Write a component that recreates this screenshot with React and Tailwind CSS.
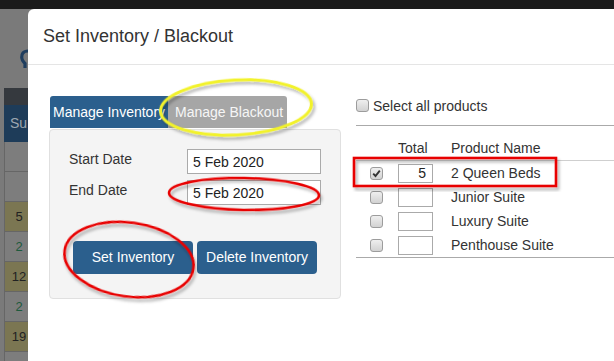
import React from "react";

function Cb({ checked }) {
  return (
    <span className="w-[13px] h-[13px] rounded-[3px] border border-[#9c9c9c] bg-linear-to-b from-[#efefef] to-[#d2d2d2] flex items-center justify-center shrink-0">
      {checked && (
        <svg width="9" height="9" viewBox="0 0 9 9">
          <path d="M1.2 4.6 L3.5 7 L7.8 1.6" stroke="#333" strokeWidth="1.9" fill="none" />
        </svg>
      )}
    </span>
  );
}

function LeftStrip() {
  const cells = [
    { bg: "bg-[#7d7d7d]", t: "" },
    { bg: "bg-[#7d7d7d]", t: "" },
    { bg: "bg-[#7b7652]", t: "5", c: "text-[#222]" },
    { bg: "bg-[#7d7d7d]", t: "2", c: "text-[#1d5a3e]" },
    { bg: "bg-[#7b7652]", t: "12", c: "text-[#222]" },
    { bg: "bg-[#7d7d7d]", t: "2", c: "text-[#1d5a3e]" },
    { bg: "bg-[#7b7652]", t: "19", c: "text-[#222]" },
    { bg: "bg-[#7d7d7d]", t: "" },
  ];
  return (
    <div className="w-[28px] shrink-0 overflow-hidden flex flex-col">
      <div className="h-[79px] flex justify-end items-start pt-[39px] shrink-0">
        <svg width="8" height="21" viewBox="0 0 8 21">
          <path d="M8 3 C3 3 1.5 6 1.8 10 C2 13 4 14 5 15.5 L5 20" stroke="#1f3d5e" strokeWidth="3.2" fill="none" />
        </svg>
      </div>
      <div className="ml-[4px] w-[40px] flex flex-col">
        <div className="h-[17px] bg-[#35393e]" />
        <div className="h-[37px] bg-[#1e3c59] flex items-center pl-[6px] text-[14px] text-[#9ea7b0]">Su</div>
        {cells.map((c, i) => (
          <div
            key={i}
            className={`h-[30px] w-[29px] border-b border-l border-[#666] ${c.bg} ${c.c || ""} flex items-center justify-center text-[13px]`}
          >
            {c.t}
          </div>
        ))}
      </div>
    </div>
  );
}

function Overlay() {
  return (
    <svg className="absolute inset-0 pointer-events-none" width="614" height="361" viewBox="0 0 614 361">
      <defs>
        <filter id="sh" x="-20%" y="-20%" width="140%" height="140%">
          <feDropShadow dx="2" dy="3" stdDeviation="1.6" floodColor="#000" floodOpacity="0.3" />
        </filter>
      </defs>
      <ellipse cx="236" cy="107.5" rx="75.5" ry="27.5" transform="rotate(-3 236 107.5)" fill="none" stroke="#f2f22a" strokeWidth="3" filter="url(#sh)" />
      <ellipse cx="244" cy="194" rx="75" ry="16" transform="rotate(1 244 194)" fill="none" stroke="#e80000" strokeWidth="2.6" filter="url(#sh)" />
      <ellipse cx="129" cy="259.5" rx="65" ry="37" transform="rotate(8 129 259.5)" fill="none" stroke="#e80000" strokeWidth="2.6" filter="url(#sh)" />
      <rect x="354" y="158" width="202" height="28" fill="none" stroke="#e80000" strokeWidth="2.6" filter="url(#sh)" />
    </svg>
  );
}

export default function App() {
  const products = [
    { name: "2 Queen Beds", checked: true, total: "5" },
    { name: "Junior Suite" },
    { name: "Luxury Suite" },
    { name: "Penthouse Suite" },
  ];
  return (
    <div className="w-[614px] h-[361px] overflow-hidden relative flex flex-col bg-[#7a7a7a] font-['Liberation_Sans',Arial,sans-serif] text-[#333]">
      <div className="h-[9px] bg-[#1b1b1b] shrink-0" />
      <div className="flex flex-1 min-h-0">
        <LeftStrip />
        <div className="flex-1 bg-white rounded-tl-[6px] flex flex-col min-w-0">
          <div className="h-[56px] shrink-0 border-b border-[#e5e5e5] pl-[15px] flex items-center text-[18px] text-[#333]">
            Set Inventory / Blackout
          </div>
          <div className="flex pl-[21px]">
            <div className="w-[292px] shrink-0 pt-[31px]">
              <div className="flex h-[32px] ml-[1px]">
                <div className="w-[118px] bg-[#2b5f8d] text-white text-[14px] flex items-center pl-[3px] whitespace-nowrap overflow-hidden rounded-tl-[3px]">
                  Manage Inventory
                </div>
                <div className="w-[119px] bg-[#a6a6a6] text-[#f6f6f6] text-[14px] flex items-center pl-[7px] whitespace-nowrap overflow-hidden rounded-tr-[3px]">
                  Manage Blackout
                </div>
              </div>
              <div className="mt-[1px] h-[170px] border border-[#e0e0e0] rounded-[4px] bg-[#f4f4f4] pl-[19px] pt-[19px]">
                <div className="grid grid-cols-[118px_134px] gap-y-[6px] text-[14px] leading-[16px]">
                  <div className="pt-[2px]">Start Date</div>
                  <div className="h-[25px] border border-[#aaa] bg-white pl-[5px] flex items-center text-[#222]">5 Feb 2020</div>
                  <div className="pt-[2px]">End Date</div>
                  <div className="h-[25px] border border-[#aaa] bg-white pl-[5px] flex items-center text-[#222]">5 Feb 2020</div>
                </div>
                <div className="flex gap-[4px] mt-[36px] ml-[4px]">
                  <div className="w-[120px] h-[33px] rounded-[4px] bg-[#2b5f8d] text-white text-[14px] flex items-center justify-center">
                    Set Inventory
                  </div>
                  <div className="w-[120px] h-[33px] rounded-[4px] bg-[#2b5f8d] text-white text-[14px] flex items-center justify-center">
                    Delete Inventory
                  </div>
                </div>
              </div>
            </div>
            <div className="flex-1 ml-[15px] pt-[33px] text-[14px] leading-[16px]">
              <div className="h-[15px] flex items-center gap-[4px]">
                <Cb />
                <span>Select all products</span>
              </div>
              <div className="mt-[12px] h-px bg-[#aaa]" />
              <div className="grid grid-cols-[42px_53px_1fr] h-[35px] border-b border-[#cfcfcf] pt-[14px]">
                <div />
                <div>Total</div>
                <div>Product Name</div>
              </div>
              {products.map((p, i) => (
                <div key={i} className="grid grid-cols-[42px_53px_1fr] h-[24px] items-center">
                  <div className="pl-[14px]">
                    <Cb checked={p.checked} />
                  </div>
                  <div className="w-[35px] h-[19px] border border-[#aaa] bg-white flex items-center justify-end pr-[6px] text-[#222]">
                    {p.total || ""}
                  </div>
                  <div>{p.name}</div>
                </div>
              ))}
              <div className="h-px bg-[#aaa]" />
            </div>
          </div>
        </div>
      </div>
      <Overlay />
    </div>
  );
}
